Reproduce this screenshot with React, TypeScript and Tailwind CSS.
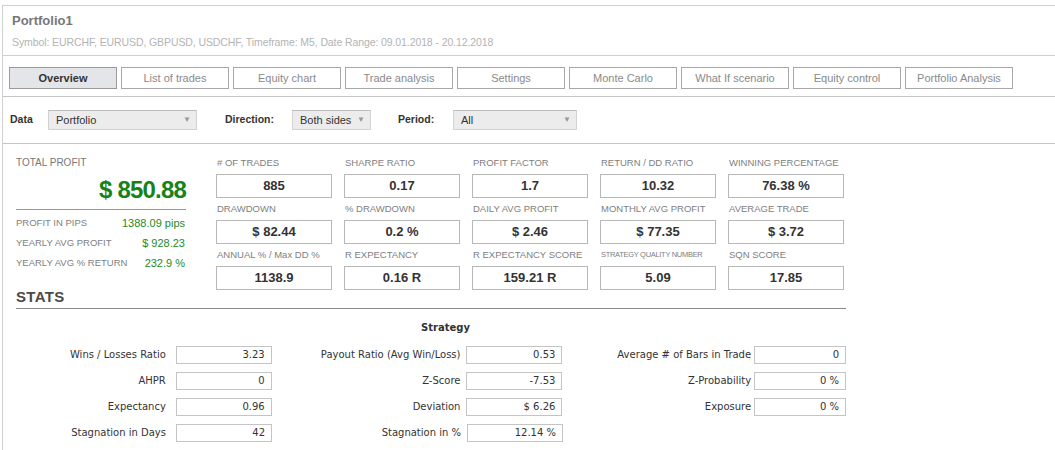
import React from "react";

const tabs = [
  "Overview",
  "List of trades",
  "Equity chart",
  "Trade analysis",
  "Settings",
  "Monte Carlo",
  "What If scenario",
  "Equity control",
  "Portfolio Analysis",
];

const metrics: { label: string; value: string; small?: boolean }[][] = [
  [
    { label: "# OF TRADES", value: "885" },
    { label: "SHARPE RATIO", value: "0.17" },
    { label: "PROFIT FACTOR", value: "1.7" },
    { label: "RETURN / DD RATIO", value: "10.32" },
    { label: "WINNING PERCENTAGE", value: "76.38 %" },
  ],
  [
    { label: "DRAWDOWN", value: "$ 82.44" },
    { label: "% DRAWDOWN", value: "0.2 %" },
    { label: "DAILY AVG PROFIT", value: "$ 2.46" },
    { label: "MONTHLY AVG PROFIT", value: "$ 77.35" },
    { label: "AVERAGE TRADE", value: "$ 3.72" },
  ],
  [
    { label: "ANNUAL % / Max DD %", value: "1138.9" },
    { label: "R EXPECTANCY", value: "0.16 R" },
    { label: "R EXPECTANCY SCORE", value: "159.21 R" },
    { label: "STRATEGY QUALITY NUMBER", value: "5.09", small: true },
    { label: "SQN SCORE", value: "17.85" },
  ],
];

const stats: [string, string][][] = [
  [
    ["Wins / Losses Ratio", "3.23"],
    ["Payout Ratio (Avg Win/Loss)", "0.53"],
    ["Average # of Bars in Trade", "0"],
  ],
  [
    ["AHPR", "0"],
    ["Z-Score", "-7.53"],
    ["Z-Probability", "0 %"],
  ],
  [
    ["Expectancy", "0.96"],
    ["Deviation", "$ 6.26"],
    ["Exposure", "0 %"],
  ],
  [
    ["Stagnation in Days", "42"],
    ["Stagnation in %", "12.14 %"],
  ],
];

function Select({ value, width }: { value: string; width: string }) {
  return (
    <div
      className={`${width} h-[20px] flex items-center justify-between bg-[#ececec] border border-[#d2d2d2] border-t-[#bdbdbd] pl-[7px] pr-[5px] text-[11px] text-[#333]`}
    >
      <span>{value}</span>
      <span className="text-[8px] text-[#999]">▼</span>
    </div>
  );
}

export default function App() {
  return (
    <div
      className="w-[1055px] h-[450px] overflow-hidden bg-white pt-[5px] pl-[2px]"
      style={{ fontFamily: '"Liberation Sans", Arial, sans-serif' }}
    >
      <div className="border-l border-t border-[#cfcfcf] h-full">
        {/* header */}
        <div className="h-[49px] pl-[9px] pt-[7px]">
          <div className="text-[13px] font-bold text-[#777] leading-[15px]">Portfolio1</div>
          <div className="text-[10.5px] text-[#b3b3b3] leading-[13px] mt-[8px] tracking-[-0.1px]">
            Symbol: EURCHF, EURUSD, GBPUSD, USDCHF, Timeframe: M5, Date Range: 09.01.2018 - 20.12.2018
          </div>
        </div>

        {/* tabs */}
        <div className="h-[41px] border-t border-[#cfcfcf] pl-[6px] pt-[11px] flex gap-[4px]">
          {tabs.map((t, i) => (
            <div
              key={t}
              className={
                i === 0
                  ? "w-[108px] h-[22px] flex items-center justify-center border border-[#9a9a9a] bg-[#e3e5e8] text-[11px] font-bold text-[#333]"
                  : "w-[108px] h-[22px] flex items-center justify-center border border-[#a8a8a8] bg-white text-[11px] text-[#8a8a8a]"
              }
            >
              {t}
            </div>
          ))}
        </div>

        {/* filters */}
        <div className="h-[47px] border-t border-[#c4c4c4] pl-[7px] flex items-center">
          <span className="w-[38px] text-[10.5px] font-bold text-[#333]">Data</span>
          <Select value="Portfolio" width="w-[149px]" />
          <span className="ml-[28px] w-[67px] text-[10.5px] font-bold text-[#333]">Direction:</span>
          <Select value="Both sides" width="w-[79px]" />
          <span className="ml-[27px] w-[55px] text-[10.5px] font-bold text-[#333]">Period:</span>
          <Select value="All" width="w-[124px]" />
        </div>

        {/* content */}
        <div className="border-t border-[#c4c4c4] pl-[13px] pt-[13px]">
          <div className="flex">
            <div className="w-[170px]">
              <div className="text-[10px] text-[#777] leading-[12px]">TOTAL PROFIT</div>
              <div className="text-right text-[24px] font-bold text-[#178317] leading-[28px] tracking-[-0.8px] mt-[7px] pb-[5px] border-b border-[#999]">
                $ 850.88
              </div>
              <div className="mt-[7px] flex flex-col gap-[8px]">
                {[
                  ["PROFIT IN PIPS", "1388.09 pips"],
                  ["YEARLY AVG PROFIT", "$ 928.23"],
                  ["YEARLY AVG % RETURN", "232.9 %"],
                ].map(([l, v]) => (
                  <div key={l} className="flex justify-between items-center h-[12px]">
                    <span className="text-[9.5px] text-[#808080]">{l}</span>
                    <span className="text-[11px] text-[#1f8a1f] pr-[1px]">{v}</span>
                  </div>
                ))}
              </div>
            </div>
            <div className="ml-[30px]">
              {metrics.map((row, ri) => (
                <div key={ri} className="flex gap-[12px]">
                  {row.map((m) => (
                    <div key={m.label} className="w-[116px]">
                      <div
                        className={`${m.small ? "text-[7.5px] tracking-[-0.3px]" : "text-[9.5px]"} text-[#808080] leading-[12px] h-[12px] flex items-center pl-[1px] whitespace-nowrap`}
                      >
                        {m.label}
                      </div>
                      <div className="mt-[5px] mb-[5px] h-[24px] border border-[#b8b8b8] flex items-center justify-center text-[13px] font-bold text-[#333]">
                        {m.value}
                      </div>
                    </div>
                  ))}
                </div>
              ))}
            </div>
          </div>

          <div className="w-[830px] -mt-[7px] pb-[3px] border-b border-[#8a8a8a] text-[15px] font-bold text-[#4a4a4a] leading-[17px] tracking-[0.3px]">
            STATS
          </div>

          <div
            className="w-[830px] leading-[14px]"
            style={{ fontFamily: '"DejaVu Sans", Tahoma, sans-serif' }}
          >
            <div className="pl-[405px] pt-[12px] text-[10px] font-bold text-[#333]">Strategy</div>
            <div className="mt-[11px] flex flex-col gap-[8px]">
              {stats.map((row, ri) => (
                <div key={ri} className="flex items-center h-[18px]">
                  {row.map(([l, v], ci) => (
                    <React.Fragment key={l}>
                      <div
                        className={`${ci === 0 ? "w-[160px] pr-[10px]" : ci === 1 ? "w-[195px] pr-[6px]" : "w-[192px] pr-[3px]"} text-right text-[10px] text-[#333] whitespace-nowrap`}
                      >
                        {l}
                      </div>
                      <div
                        className={`${ci === 2 ? "w-[92px]" : "w-[96px]"} h-[18px] border border-[#c4c4c4] flex items-center justify-end pr-[6px] text-[10px] text-[#333]`}
                      >
                        {v}
                      </div>
                    </React.Fragment>
                  ))}
                </div>
              ))}
            </div>
          </div>
        </div>
      </div>
    </div>
  );
}
